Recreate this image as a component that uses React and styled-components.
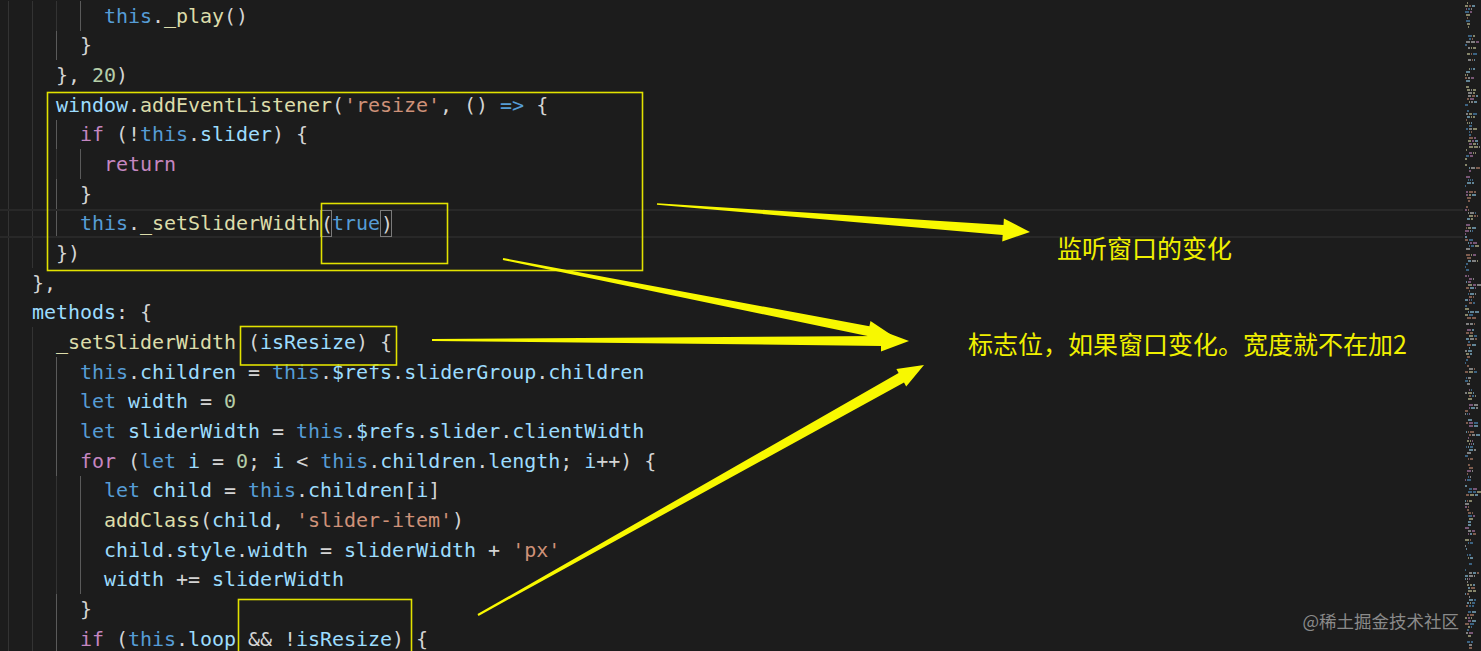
import React from "react";
import styled, { createGlobalStyle, css } from "styled-components";

const Global = createGlobalStyle`
  html, body {
    margin: 0;
    padding: 0;
    background: #1c1c1c;
  }
`;

const COLORS = {
  k: "#569cd6",
  c: "#c586c0",
  f: "#dcdcaa",
  v: "#9cdcfe",
  s: "#ce9178",
  n: "#b5cea8",
  p: "#d4d4d4",
};

const Root = styled.div`
  position: relative;
  width: 1481px;
  height: 651px;
  overflow: hidden;
  background: #1c1c1c;
  display: flex;
`;

const Code = styled.div`
  flex: 1;
  display: flex;
  flex-direction: column;
  padding-top: 1px;
  font-family: "DejaVu Sans Mono", "Liberation Mono", monospace;
  font-size: 20px;
  letter-spacing: -0.04px;
`;

const Line = styled.div`
  height: 29.67px;
  flex: none;
  box-sizing: border-box;
  display: flex;
  align-items: center;
  padding-left: 8px;
  white-space: pre;
  ${(p) =>
    p.$current &&
    css`
      border-top: 2px solid #282828;
      border-bottom: 2px solid #282828;
    `}
`;

const Guide = styled.span`
  align-self: stretch;
  flex: none;
  width: 24px;
  box-sizing: border-box;
  border-left: 1px solid ${(p) => (p.$active ? "#5a5a5a" : "#333333")};
`;

const Tok = styled.span`
  color: ${(p) => COLORS[p.$k]};
`;

const Bracket = styled.span`
  display: inline-block;
  width: 12px;
  height: 27px;
  line-height: 27px;
  box-sizing: border-box;
  border: 1px solid #7a7a7a;
  color: #d4d4d4;
`;

const Minimap = styled.div`
  width: 18px;
  flex: none;
  display: flex;
  flex-direction: column;
  gap: 1px;
  padding-top: 2px;
`;

const MiniRow = styled.div`
  display: flex;
  gap: 1px;
  height: 2px;
  padding-left: ${(p) => p.$indent}px;
`;

const MiniSeg = styled.span`
  height: 2px;
  background: ${(p) => p.$c};
  opacity: 0.55;
`;

const Overlay = styled.svg`
  position: absolute;
  left: 0;
  top: 0;
  pointer-events: none;
`;

const Note = styled.div`
  position: absolute;
  left: ${(p) => p.$x}px;
  top: ${(p) => p.$y}px;
  color: #f0f000;
  font-family: "Noto Sans CJK SC", sans-serif;
  font-size: 25px;
  line-height: 1;
  white-space: nowrap;
`;

const Watermark = styled.div`
  position: absolute;
  right: 22px;
  bottom: 22px;
  color: #8a8a8a;
  font-family: "Noto Sans CJK SC", sans-serif;
  font-size: 17.5px;
  line-height: 1;
`;

// [indent, tokens] ; kind "b" marks a matched bracket
const LINES = [
  [4, [["this", "k"], [".", "p"], ["_play", "f"], ["()", "p"]]],
  [3, [["}", "p"]]],
  [2, [["}, ", "p"], ["20", "n"], [")", "p"]]],
  [2, [["window", "v"], [".", "p"], ["addEventListener", "f"], ["(", "p"], ["'resize'", "s"], [", () ", "p"], ["=>", "k"], [" {", "p"]]],
  [3, [["if", "c"], [" (!", "p"], ["this", "k"], [".", "p"], ["slider", "v"], [") {", "p"]]],
  [4, [["return", "c"]]],
  [3, [["}", "p"]]],
  [3, [["this", "k"], [".", "p"], ["_setSliderWidth", "f"], ["(", "b"], ["true", "k"], [")", "b"]]],
  [2, [["})", "p"]]],
  [1, [["},", "p"]]],
  [1, [["methods", "v"], [": {", "p"]]],
  [2, [["_setSliderWidth", "f"], [" (", "p"], ["isResize", "v"], [") {", "p"]]],
  [3, [["this", "k"], [".", "p"], ["children", "v"], [" = ", "p"], ["this", "k"], [".", "p"], ["$refs", "v"], [".", "p"], ["sliderGroup", "v"], [".", "p"], ["children", "v"]]],
  [3, [["let", "k"], [" ", "p"], ["width", "v"], [" = ", "p"], ["0", "n"]]],
  [3, [["let", "k"], [" ", "p"], ["sliderWidth", "v"], [" = ", "p"], ["this", "k"], [".", "p"], ["$refs", "v"], [".", "p"], ["slider", "v"], [".", "p"], ["clientWidth", "v"]]],
  [3, [["for", "c"], [" (", "p"], ["let", "k"], [" ", "p"], ["i", "v"], [" = ", "p"], ["0", "n"], ["; ", "p"], ["i", "v"], [" < ", "p"], ["this", "k"], [".", "p"], ["children", "v"], [".", "p"], ["length", "v"], ["; ", "p"], ["i", "v"], ["++) {", "p"]]],
  [4, [["let", "k"], [" ", "p"], ["child", "v"], [" = ", "p"], ["this", "k"], [".", "p"], ["children", "v"], ["[", "p"], ["i", "v"], ["]", "p"]]],
  [4, [["addClass", "f"], ["(", "p"], ["child", "v"], [", ", "p"], ["'slider-item'", "s"], [")", "p"]]],
  [4, [["child", "v"], [".", "p"], ["style", "v"], [".", "p"], ["width", "v"], [" = ", "p"], ["sliderWidth", "v"], [" + ", "p"], ["'px'", "s"]]],
  [4, [["width", "v"], [" += ", "p"], ["sliderWidth", "v"]]],
  [3, [["}", "p"]]],
  [3, [["if", "c"], [" (", "p"], ["this", "k"], [".", "p"], ["loop", "v"], [" && !", "p"], ["isResize", "v"], [") {", "p"]]],
];

function arrow(x0, y0, x1, y1, w0, w1, hl, hw) {
  const len = Math.hypot(x1 - x0, y1 - y0);
  const ux = (x1 - x0) / len;
  const uy = (y1 - y0) / len;
  const nx = -uy;
  const ny = ux;
  const bx = x1 - ux * hl;
  const by = y1 - uy * hl;
  const pts = [
    [x0 + (nx * w0) / 2, y0 + (ny * w0) / 2],
    [bx + (nx * w1) / 2, by + (ny * w1) / 2],
    [bx + (nx * hw) / 2, by + (ny * hw) / 2],
    [x1, y1],
    [bx - (nx * hw) / 2, by - (ny * hw) / 2],
    [bx - (nx * w1) / 2, by - (ny * w1) / 2],
    [x0 - (nx * w0) / 2, y0 - (ny * w0) / 2],
  ];
  return pts.map((p) => p.map((n) => n.toFixed(1)).join(",")).join(" ");
}

const ARROWS = [
  [657, 204, 1030, 232, 1.5, 10, 27, 23],
  [503, 259, 893, 336, 2, 10, 25, 21],
  [432, 340, 909, 341, 2, 10, 28, 21],
  [478, 615, 924, 365, 2, 11, 26, 20],
];

const BOXES = [
  [47.5, 92.5, 595, 178],
  [321.5, 203.5, 126, 60],
  [240.5, 326.5, 156, 38.5],
  [238.5, 599.5, 173, 60],
];

const MINI_COLORS = ["#9cdcfe", "#569cd6", "#dcdcaa", "#c586c0", "#ce9178", "#d4d4d4"];

function miniRows() {
  let seed = 7;
  const rnd = () => {
    seed = (seed * 9301 + 49297) % 233280;
    return seed / 233280;
  };
  const rows = [];
  for (let i = 0; i < 216; i++) {
    const r = rnd();
    if (r < 0.12) {
      rows.push({ indent: 0, segs: [] });
      continue;
    }
    const indent = 2 + Math.floor(rnd() * 5);
    const count = 1 + Math.floor(rnd() * 3);
    const segs = [];
    for (let j = 0; j < count; j++) {
      segs.push({
        w: 1 + Math.floor(rnd() * 4),
        c: MINI_COLORS[Math.floor(rnd() * MINI_COLORS.length)],
      });
    }
    rows.push({ indent, segs });
  }
  return rows;
}

const MINI = miniRows();

function CodeLine({ indent, tokens, current }) {
  const guides = [];
  for (let i = 0; i < indent; i++) {
    guides.push(<Guide key={i} $active={i === indent - 1 && indent > 2} />);
  }
  return (
    <Line $current={current}>
      {guides}
      {tokens.map(([text, kind], i) =>
        kind === "b" ? (
          <Bracket key={i}>{text}</Bracket>
        ) : (
          <Tok key={i} $k={kind}>
            {text}
          </Tok>
        )
      )}
    </Line>
  );
}

export default function App() {
  return (
    <>
      <Global />
      <Root>
        <Code>
          {LINES.map(([indent, tokens], i) => (
            <CodeLine key={i} indent={indent} tokens={tokens} current={i === 7} />
          ))}
        </Code>
        <Minimap>
          {MINI.map((row, i) => (
            <MiniRow key={i} $indent={row.indent}>
              {row.segs.map((s, j) => (
                <MiniSeg key={j} $c={s.c} style={{ width: s.w + "px" }} />
              ))}
            </MiniRow>
          ))}
        </Minimap>

        <Overlay width="1481" height="651" viewBox="0 0 1481 651">
          {BOXES.map(([x, y, w, h], i) => (
            <rect key={i} x={x} y={y} width={w} height={h} fill="none" stroke="#e2e200" strokeWidth="1.6" />
          ))}
          {ARROWS.map((a, i) => (
            <polygon key={i} points={arrow(...a)} fill="#f8f800" />
          ))}
        </Overlay>

        <Note $x={1057} $y={235}>监听窗口的变化</Note>
        <Note $x={968} $y={331}>标志位，如果窗口变化。宽度就不在加2</Note>
        <Watermark>@稀土掘金技术社区</Watermark>
      </Root>
    </>
  );
}
